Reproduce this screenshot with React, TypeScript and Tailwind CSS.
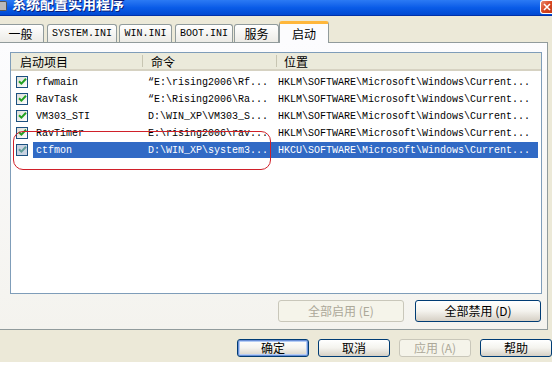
import React from "react";

const CJK = "font-['Noto_Sans_CJK_SC',sans-serif]";
const MONO = "font-['Liberation_Mono','Noto_Sans_CJK_SC',monospace]";

type Item = { name: string; cmd: string; loc: string; selected?: boolean };

const ITEMS: Item[] = [
  { name: "rfwmain", cmd: "“E:\\rising2006\\Rf...", loc: "HKLM\\SOFTWARE\\Microsoft\\Windows\\Current..." },
  { name: "RavTask", cmd: "“E:\\Rising2006\\Ra...", loc: "HKLM\\SOFTWARE\\Microsoft\\Windows\\Current..." },
  { name: "VM303_STI", cmd: "D:\\WIN_XP\\VM303_S...", loc: "HKLM\\SOFTWARE\\Microsoft\\Windows\\Current..." },
  { name: "RavTimer", cmd: "E:\\rising2006\\rav...", loc: "HKLM\\SOFTWARE\\Microsoft\\Windows\\Current..." },
  { name: "ctfmon", cmd: "D:\\WIN_XP\\system3...", loc: "HKCU\\SOFTWARE\\Microsoft\\Windows\\Current...", selected: true },
];

function CheckBox({ dim }: { dim?: boolean }) {
  return (
    <div
      className={`w-[12px] h-[12px] border border-[#1C5180] flex items-center justify-center ${
        dim ? "bg-[#c9d3e2]" : "bg-gradient-to-br from-[#DCDCD7] to-white"
      }`}
    >
      <svg width="9" height="9" viewBox="0 0 9 9">
        <path d="M1 4.2 L3.4 6.6 L8 1.8" fill="none" stroke={dim ? "#5f9c96" : "#21A121"} strokeWidth="2" />
      </svg>
    </div>
  );
}

function Tab({ label, w, mono }: { label: string; w: string; mono?: boolean }) {
  return (
    <div
      className={`${w} h-[18px] border border-b-0 border-[#919B9C] rounded-t-[3px] bg-gradient-to-b from-white to-[#ECEBE6] flex items-center justify-center text-black ${
        mono ? `${MONO} text-[10px]` : `${CJK} text-[12px]`
      }`}
    >
      {label}
    </div>
  );
}

function XpButton({ label, w, disabled, isDefault }: { label: React.ReactNode; w: string; disabled?: boolean; isDefault?: boolean }) {
  return (
    <div
      className={`${w} border rounded-[3px] flex items-center justify-center ${CJK} text-[12px] ${
        disabled
          ? "border-[#C9C7BA] bg-[#F5F4EA] text-[#ACA899]"
          : "border-[#003C74] bg-gradient-to-b from-white via-[#F4F3EE] to-[#D6D0C5] text-black"
      } ${isDefault ? "shadow-[inset_0_0_0_1px_#6A8FD6,inset_0_0_0_2px_#B5CDF5]" : ""}`}
    >
      {label}
    </div>
  );
}

export default function App() {
  return (
    <div className="w-[552px] h-[384px] bg-white overflow-hidden relative">
      {/* title bar */}
      <div className="h-[16px] bg-gradient-to-b from-[#2B7AF4] via-[#0A5CE8] to-[#0149D2] border-b border-[#0031A8] flex items-start overflow-hidden">
        <div className="w-[7px] h-[10px] mt-[1px] bg-[#B9B9B9] rounded-r-[2px] border border-[#555] border-l-0" />
        <div className={`${CJK} text-[14px] font-bold text-white leading-[14px] -mt-[4px] ml-[5px] [text-shadow:1px_1px_0_#0A1E7A]`}>
          系统配置实用程序
        </div>
        <div className="ml-auto w-[12px] h-[14px] bg-gradient-to-br from-[#E9876B] via-[#D8471F] to-[#C4391A] border border-white border-r-0 rounded-l-[3px] flex items-center justify-center">
          <svg width="8" height="8" viewBox="0 0 8 8">
            <path d="M1 1 L7 7 M7 1 L1 7" stroke="white" strokeWidth="1.6" />
          </svg>
        </div>
      </div>

      {/* window body */}
      <div className="h-[346px] bg-[#ECE9D8] flex flex-col">
        {/* tab strip */}
        <div className="h-[26px] flex items-end -ml-[3px] relative z-10">
          <Tab label="一般" w="w-[47px]" />
          <div className="w-[3px]" />
          <Tab label="SYSTEM.INI" w="w-[70px]" mono />
          <div className="w-[2px]" />
          <Tab label="WIN.INI" w="w-[53px]" mono />
          <div className="w-[3px]" />
          <Tab label="BOOT.INI" w="w-[58px]" mono />
          <div className="w-[1px]" />
          <Tab label="服务" w="w-[45px]" />
          <div className={`w-[50px] h-[22px] -mb-[1px] border border-b-0 border-[#919B9C] border-t-[3px] border-t-[#FFB73C] rounded-t-[3px] bg-[#FCFCFE] flex items-start justify-center pt-[1px] ${CJK} text-[12px] text-black`}>
            启动
          </div>
        </div>

        {/* tab panel */}
        <div className="h-[288px] w-[551px] -ml-[3px] border border-[#919B9C] bg-gradient-to-b from-[#FCFCFE] to-[#F4F3EE] flex flex-col pt-[9px] pl-[12px]">
          {/* list view */}
          <div className="w-[532px] h-[242px] border border-[#7F9DB9] bg-white flex flex-col">
            <div className={`h-[18px] flex items-center bg-[#EBEADB] border-b-2 border-[#D6D2C2] ${CJK} text-[12px] text-black`}>
              <div className="w-[132px] pl-[9px] border-r border-[#C7C5B2] h-[12px] flex items-center pt-[1px]">启动项目</div>
              <div className="w-[134px] pl-[8px] border-r border-[#C7C5B2] h-[12px] flex items-center pt-[1px]">命令</div>
              <div className="flex-1 pl-[7px] pt-[1px]">位置</div>
            </div>
            <div className="h-[2px]" />
            {ITEMS.map((it) => (
              <div key={it.name} className={`h-[17px] flex items-center ${MONO} text-[10px] text-black whitespace-nowrap`}>
                <div className="w-[22px] pl-[5px]">
                  <CheckBox dim={it.selected} />
                </div>
                <div className={`h-[16px] w-[505px] flex items-center pt-[2px] ${it.selected ? "bg-[#316AC5] text-white" : ""}`}>
                  <div className="w-[110px] pl-[3px]">{it.name}</div>
                  <div className="w-[134px] pl-[5px]">{it.cmd}</div>
                  <div className="flex-1 pl-[1px]">{it.loc}</div>
                </div>
              </div>
            ))}
          </div>

          {/* list buttons */}
          <div className="h-[22px] mt-[6px] flex">
            <div className="w-[268px]" />
            <XpButton label="全部启用 (E)" w="w-[126px]" disabled />
            <div className="w-[11px]" />
            <XpButton label="全部禁用 (D)" w="w-[126px]" />
          </div>
        </div>

        {/* dialog buttons */}
        <div className="h-[18px] mt-[9px] flex">
          <div className="w-[237px]" />
          <XpButton label="确定" w="w-[72px]" isDefault />
          <div className="w-[9px]" />
          <XpButton label="取消" w="w-[72px]" />
          <div className="w-[9px]" />
          <XpButton label="应用 (A)" w="w-[72px]" disabled />
          <div className="w-[9px]" />
          <XpButton label="帮助" w="w-[72px]" />
        </div>
      </div>

      {/* red annotation around ctfmon */}
      <div className="absolute left-[13px] top-[131px] w-[258px] h-[39px] border border-[#D0202A] rounded-[10px] pointer-events-none" />
    </div>
  );
}
